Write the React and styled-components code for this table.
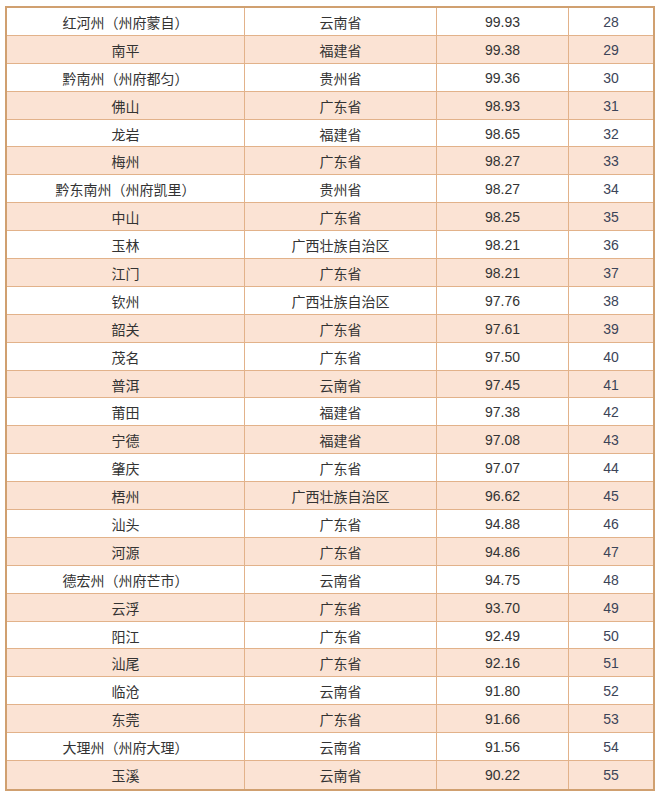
import React from 'react';
import styled, { createGlobalStyle } from 'styled-components';

const GlobalStyle = createGlobalStyle`
  html, body {
    margin: 0;
    padding: 0;
    background: #ffffff;
  }
`;

const Page = styled.div`
  padding: 6px 0 0 5px;
`;

const Table = styled.div`
  width: 650px;
  border: 2px solid #d0a070;
  box-sizing: border-box;
  display: flex;
  flex-direction: column;
`;

const Row = styled.div`
  display: grid;
  grid-template-columns: 238px 192px 132px 1fr;
  height: 27.9px;
  box-sizing: border-box;
  border-bottom: ${p => (p.$last ? 'none' : '1px solid #e2b28a')};
  background: ${p => (p.$shade ? '#fbe3d4' : '#ffffff')};
`;

const Cell = styled.div`
  display: flex;
  align-items: center;
  justify-content: center;
  border-right: ${p => (p.$end ? 'none' : '1px solid #e2b28a')};
  font-family: ${p => (p.$num ? '"Liberation Sans", Arial' : '"Noto Sans CJK SC"')}, "Noto Sans CJK SC", sans-serif;
  font-size: 14px;
  color: ${p => (p.$rank ? '#3c4458' : '#333333')};
  padding-top: 1px;
  white-space: nowrap;
`;

const rows = [
  ['红河州（州府蒙自）', '云南省', '99.93', 28],
  ['南平', '福建省', '99.38', 29],
  ['黔南州（州府都匀）', '贵州省', '99.36', 30],
  ['佛山', '广东省', '98.93', 31],
  ['龙岩', '福建省', '98.65', 32],
  ['梅州', '广东省', '98.27', 33],
  ['黔东南州（州府凯里）', '贵州省', '98.27', 34],
  ['中山', '广东省', '98.25', 35],
  ['玉林', '广西壮族自治区', '98.21', 36],
  ['江门', '广东省', '98.21', 37],
  ['钦州', '广西壮族自治区', '97.76', 38],
  ['韶关', '广东省', '97.61', 39],
  ['茂名', '广东省', '97.50', 40],
  ['普洱', '云南省', '97.45', 41],
  ['莆田', '福建省', '97.38', 42],
  ['宁德', '福建省', '97.08', 43],
  ['肇庆', '广东省', '97.07', 44],
  ['梧州', '广西壮族自治区', '96.62', 45],
  ['汕头', '广东省', '94.88', 46],
  ['河源', '广东省', '94.86', 47],
  ['德宏州（州府芒市）', '云南省', '94.75', 48],
  ['云浮', '广东省', '93.70', 49],
  ['阳江', '广东省', '92.49', 50],
  ['汕尾', '广东省', '92.16', 51],
  ['临沧', '云南省', '91.80', 52],
  ['东莞', '广东省', '91.66', 53],
  ['大理州（州府大理）', '云南省', '91.56', 54],
  ['玉溪', '云南省', '90.22', 55],
];

const App = () => (
  <Page>
    <GlobalStyle />
    <Table>
      {rows.map(([city, prov, score, rank], i) => (
        <Row key={rank} $shade={i % 2 === 1} $last={i === rows.length - 1}>
          <Cell>{city}</Cell>
          <Cell>{prov}</Cell>
          <Cell $num>{score}</Cell>
          <Cell $num $rank $end>{rank}</Cell>
        </Row>
      ))}
    </Table>
  </Page>
);

export default App;
